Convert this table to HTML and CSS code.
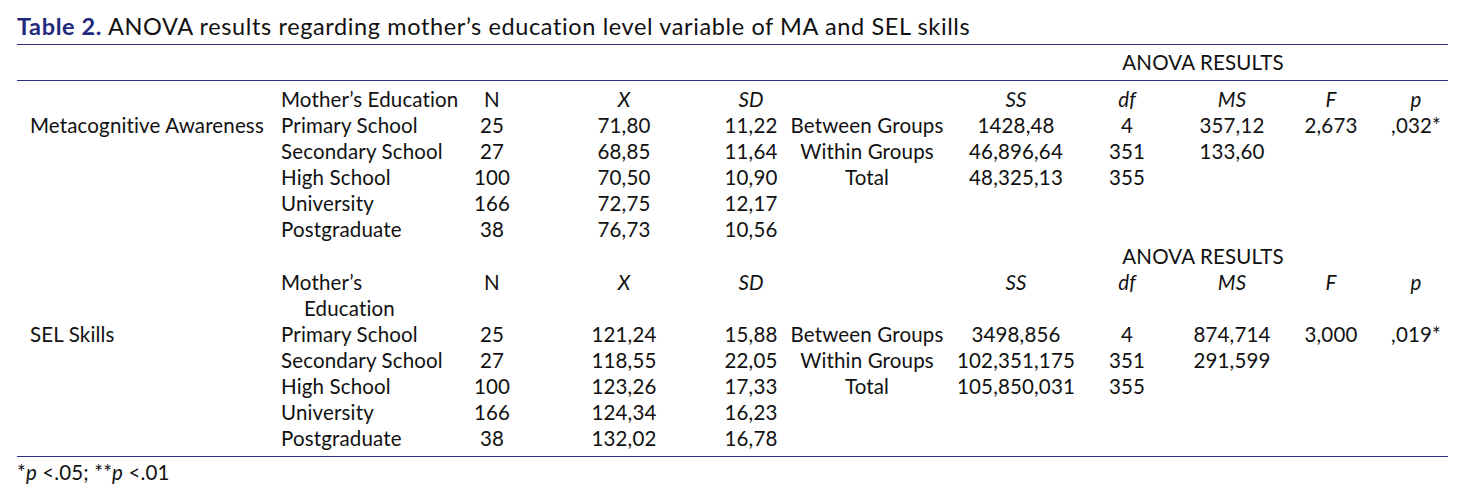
FILE: index.html
```html
<!DOCTYPE html>
<html lang="en">
<head>
<meta charset="utf-8">
<title>Table 2</title>
<link rel="stylesheet" href="styles.css">
</head>
<body>
<div class="page">
  <div class="caption"><span class="label">Table 2.</span> ANOVA results regarding mother’s education level variable of MA and SEL skills</div>
  <div class="table">
    <div class="row group-head first"><div class="cell span-anova">ANOVA RESULTS</div></div>

    <div class="row">
      <div class="cell left"></div>
      <div class="cell left">Mother’s Education</div>
      <div class="cell c">N</div>
      <div class="cell c i">X</div>
      <div class="cell c i">SD</div>
      <div class="cell c"></div>
      <div class="cell c i">SS</div>
      <div class="cell c i">df</div>
      <div class="cell c i">MS</div>
      <div class="cell c i">F</div>
      <div class="cell c i p">p</div>
    </div>
    <div class="row">
      <div class="cell left name">Metacognitive Awareness</div>
      <div class="cell left">Primary School</div>
      <div class="cell c">25</div>
      <div class="cell c">71,80</div>
      <div class="cell c">11,22</div>
      <div class="cell c">Between Groups</div>
      <div class="cell c">1428,48</div>
      <div class="cell c">4</div>
      <div class="cell c">357,12</div>
      <div class="cell c">2,673</div>
      <div class="cell c p">,032*</div>
    </div>
    <div class="row">
      <div class="cell left"></div>
      <div class="cell left">Secondary School</div>
      <div class="cell c">27</div>
      <div class="cell c">68,85</div>
      <div class="cell c">11,64</div>
      <div class="cell c">Within Groups</div>
      <div class="cell c">46,896,64</div>
      <div class="cell c">351</div>
      <div class="cell c">133,60</div>
      <div class="cell c"></div>
      <div class="cell c p"></div>
    </div>
    <div class="row">
      <div class="cell left"></div>
      <div class="cell left">High School</div>
      <div class="cell c">100</div>
      <div class="cell c">70,50</div>
      <div class="cell c">10,90</div>
      <div class="cell c">Total</div>
      <div class="cell c">48,325,13</div>
      <div class="cell c">355</div>
      <div class="cell c"></div>
      <div class="cell c"></div>
      <div class="cell c p"></div>
    </div>
    <div class="row">
      <div class="cell left"></div>
      <div class="cell left">University</div>
      <div class="cell c">166</div>
      <div class="cell c">72,75</div>
      <div class="cell c">12,17</div>
    </div>
    <div class="row">
      <div class="cell left"></div>
      <div class="cell left">Postgraduate</div>
      <div class="cell c">38</div>
      <div class="cell c">76,73</div>
      <div class="cell c">10,56</div>
    </div>

    <div class="row group-head second"><div class="cell span-anova">ANOVA RESULTS</div></div>
    <div class="row two-line">
      <div class="cell left"></div>
      <div class="cell left hang">Mother’s<br>Education</div>
      <div class="cell c">N</div>
      <div class="cell c i">X</div>
      <div class="cell c i">SD</div>
      <div class="cell c"></div>
      <div class="cell c i">SS</div>
      <div class="cell c i">df</div>
      <div class="cell c i">MS</div>
      <div class="cell c i">F</div>
      <div class="cell c i p">p</div>
    </div>
    <div class="row">
      <div class="cell left name">SEL Skills</div>
      <div class="cell left">Primary School</div>
      <div class="cell c">25</div>
      <div class="cell c">121,24</div>
      <div class="cell c">15,88</div>
      <div class="cell c">Between Groups</div>
      <div class="cell c">3498,856</div>
      <div class="cell c">4</div>
      <div class="cell c">874,714</div>
      <div class="cell c">3,000</div>
      <div class="cell c p">,019*</div>
    </div>
    <div class="row">
      <div class="cell left"></div>
      <div class="cell left">Secondary School</div>
      <div class="cell c">27</div>
      <div class="cell c">118,55</div>
      <div class="cell c">22,05</div>
      <div class="cell c">Within Groups</div>
      <div class="cell c">102,351,175</div>
      <div class="cell c">351</div>
      <div class="cell c">291,599</div>
    </div>
    <div class="row">
      <div class="cell left"></div>
      <div class="cell left">High School</div>
      <div class="cell c">100</div>
      <div class="cell c">123,26</div>
      <div class="cell c">17,33</div>
      <div class="cell c">Total</div>
      <div class="cell c">105,850,031</div>
      <div class="cell c">355</div>
    </div>
    <div class="row">
      <div class="cell left"></div>
      <div class="cell left">University</div>
      <div class="cell c">166</div>
      <div class="cell c">124,34</div>
      <div class="cell c">16,23</div>
    </div>
    <div class="row last">
      <div class="cell left"></div>
      <div class="cell left">Postgraduate</div>
      <div class="cell c">38</div>
      <div class="cell c">132,02</div>
      <div class="cell c">16,78</div>
    </div>
  </div>
  <div class="footnote">*<i>p</i> &lt;.05; **<i>p</i> &lt;.01</div>
</div>
</body>
</html>
```
FILE: styles.css
```css
html, body {
  margin: 0;
  padding: 0;
  background: #ffffff;
}

body {
  font-family: "Lato", "Open Sans", sans-serif;
  color: #111111;
  font-size: 20.5px;
  letter-spacing: 0.15px;
}

.page {
  width: 1431px;
  margin-left: 17px;
}

.caption {
  font-size: 23.5px;
  letter-spacing: 0.62px;
  line-height: 28px;
  padding-top: 12px;
  padding-bottom: 4px;
  border-bottom: 1.5px solid #2a3184;
  white-space: nowrap;
}

.caption .label {
  color: #1f2a7c;
  font-weight: 700;
}

.table {
  border-bottom: 1.5px solid #2a3184;
  padding-bottom: 5px;
}

.row {
  display: grid;
  grid-template-columns: 264px 181px 60px 204px 50px 182px 116px 106px 104px 94px 70px;
  line-height: 26px;
}

.row.group-head.first {
  line-height: 35px;
  border-bottom: 1.5px solid #2a3184;
  margin-bottom: 5px;
}

.row.group-head.second {
  margin-top: 1px;
}

.cell {
  white-space: nowrap;
  min-width: 0;
}

.cell.c {
  display: flex;
  justify-content: center;
}

.cell.left {
  display: block;
}

.cell.name {
  padding-left: 13px;
}

.cell.i {
  font-style: italic;
}

.cell.p {
  padding-left: 6px;
}

.cell.hang {
  text-indent: -23px;
  padding-left: 23px;
  white-space: normal;
}

.span-anova {
  grid-column: 7 / 12;
  text-align: center;
}

.footnote {
  line-height: 26px;
  padding-top: 2px;
}
```
